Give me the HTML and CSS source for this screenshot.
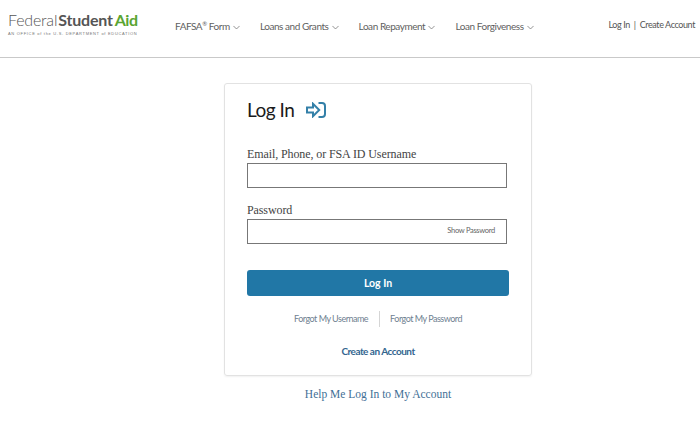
FILE: index.html
```html
<!DOCTYPE html>
<html lang="en">
<head>
    <meta charset="UTF-8">
    <meta name="viewport" content="width=device-width, initial-scale=1.0">
    <title>Log In | Federal Student Aid</title>
    <link rel="stylesheet" href="styles.css">
</head>
<body>
    <header class="header">
        <a class="logo" href="#home">
            <span class="logo-name"><span class="logo-thin">Federal</span><span class="logo-bold">Student</span><span class="logo-green">Aid</span></span>
            <span class="logo-sub">AN OFFICE of the U.S. DEPARTMENT of EDUCATION</span>
        </a>
        <nav class="nav">
            <a href="#fafsa">FAFSA<sup>®</sup> Form <svg class="chev" viewBox="0 0 8 5"><path d="M.5.7 4 4.2 7.500.7"/></svg></a>
            <a href="#loans">Loans and Grants <svg class="chev" viewBox="0 0 8 5"><path d="M.5.7 4 4.200 7.500.7"/></svg></a>
            <a href="#repay">Loan Repayment <svg class="chev" viewBox="0 0 8 5"><path d="M.5.7 4 4.2 7.500.7"/></svg></a>
            <a href="#forgive">Loan Forgiveness <svg class="chev" viewBox="0 0 8 5"><path d="M.5.7 4 4.2 7.500.7"/></svg></a>
        </nav>
        <div class="account">
            <a href="#login">Log In</a><span class="pipe">|</span><a href="#create">Create Account</a>
        </div>
    </header>

    <div class="main">
        <div class="card">
            <div class="card-title">
                <h1>Log In</h1>
                <svg class="login-icon" viewBox="0 0 20 16">
                    <path d="M1 5.500h6V1.800L13.200 8 7 14.200V10.500H1z"/>
                    <path d="M12.500 1H16q3 0 3 3v8q0 3-3 3h-3.500"/>
                </svg>
            </div>

            <label class="field-label" for="username">Email, Phone, or FSA ID Username</label>
            <input type="text" id="username" class="form-control">

            <label class="field-label" for="password">Password</label>
            <div class="password-wrap">
                <input type="password" id="password" class="form-control">
                <span class="show-password">Show Password</span>
            </div>

            <button class="btn">Log In</button>

            <div class="forgot">
                <a href="#username">Forgot My Username</a>
                <a href="#password">Forgot My Password</a>
            </div>
            <a class="create" href="#create">Create an Account</a>
        </div>
        <a class="help" href="#help">Help Me Log In to My Account</a>
    </div>
</body>
</html>
```

FILE: styles.css
```css
body {
    font-family: Lato, 'Liberation Sans', sans-serif;
    background-color: white;
    margin: 0;
    padding: 0;
    color: #555;
}
a {
    text-decoration: none;
    color: inherit;
}
.header {
    height: 58px;
    box-sizing: border-box;
    border-bottom: 1px solid #c9c9c9;
    display: flex;
    align-items: flex-start;
    padding: 0 5px 0 8px;
}
.logo {
    display: flex;
    flex-direction: column;
    width: 130px;
    margin-top: 11px;
}
.logo-name {
    font-size: 16px;
    letter-spacing: -0.2px;
    line-height: 18px;
    white-space: nowrap;
}
.logo-thin {
    font-weight: 300;
    color: #555;
    margin-right: 1px;
}
.logo-bold {
    font-weight: 700;
    color: #555;
    margin-right: 2px;
}
.logo-green {
    font-weight: 700;
    color: #5aa532;
    letter-spacing: -0.5px;
}
.logo-sub {
    font-family: 'Liberation Sans', sans-serif;
    font-size: 4px;
    line-height: 5px;
    margin-top: 2px;
    letter-spacing: 0.69px;
    white-space: nowrap;
    color: #777;
}
.nav {
    display: flex;
    gap: 20px;
    margin-left: 37px;
    margin-top: 19px;
    font-size: 10px;
    letter-spacing: -0.45px;
    line-height: 14px;
    color: #5f5f5f;
}
.nav a {
    white-space: nowrap;
}
.nav sup {
    font-size: 6px;
    line-height: 0;
}
.chev {
    width: 7px;
    height: 5px;
    margin-left: 1px;
    fill: none;
    stroke: #666;
    stroke-width: 0.8;
}
.account {
    margin-left: auto;
    margin-top: 18px;
    font-size: 9px;
    letter-spacing: -0.4px;
    line-height: 14px;
    color: #555;
    white-space: nowrap;
}
.pipe {
    margin: 0 4px;
}
.main {
    display: flex;
    flex-direction: column;
    align-items: center;
    margin-top: 25px;
    padding-left: 56px;
}
.card {
    width: 308px;
    height: 293px;
    box-sizing: border-box;
    border: 1px solid #e2e2e2;
    border-radius: 3px;
    box-shadow: 0 1px 2px rgba(0, 0, 0, 0.06);
    padding: 0 22px;
}
.card-title {
    display: flex;
    align-items: center;
    height: 51px;
    margin-bottom: 12px;
}
.card-title h1 {
    margin: 0;
    font-size: 19px;
    font-weight: 400;
    letter-spacing: -0.5px;
    color: #1b1b1b;
}
.login-icon {
    width: 20px;
    height: 16px;
    margin-left: 12px;
    fill: none;
    stroke: #3480a8;
    stroke-width: 2;
}
.field-label {
    display: block;
    font-family: 'Liberation Serif', serif;
    font-size: 12px;
    letter-spacing: -0.1px;
    line-height: 14px;
    color: #444;
    height: 16px;
    box-sizing: border-box;
}
.form-control {
    display: block;
    width: 260px;
    height: 25px;
    box-sizing: border-box;
    margin: 0 0 15px;
    border: 1px solid #777;
    padding: 0 8px;
}
.password-wrap {
    position: relative;
}
.show-password {
    position: absolute;
    right: 14px;
    top: 7px;
    font-size: 7.500px;
    letter-spacing: -0.3px;
    line-height: 10px;
    color: #666;
}
.btn {
    display: block;
    width: 262px;
    height: 26px;
    margin-top: 26px;
    border: none;
    border-radius: 3px;
    background-color: #2177a6;
    color: white;
    font-family: inherit;
    font-weight: 700;
    font-size: 10.500px;
}
.forgot {
    display: flex;
    justify-content: center;
    margin-top: 15px;
    font-size: 9px;
    letter-spacing: -0.5px;
    line-height: 16px;
    color: #6f8191;
}
.forgot a:first-child {
    padding-right: 11px;
    border-right: 1px solid #d5d5d5;
}
.forgot a:last-child {
    padding-left: 10px;
}
.create {
    display: block;
    text-align: center;
    margin-top: 17px;
    font-size: 10px;
    font-weight: 700;
    letter-spacing: -0.5px;
    line-height: 14px;
    color: #33658f;
}
.help {
    margin-top: 11px;
    font-family: 'Liberation Serif', serif;
    font-size: 11.500px;
    line-height: 14px;
    color: #3f6f96;
}
```
